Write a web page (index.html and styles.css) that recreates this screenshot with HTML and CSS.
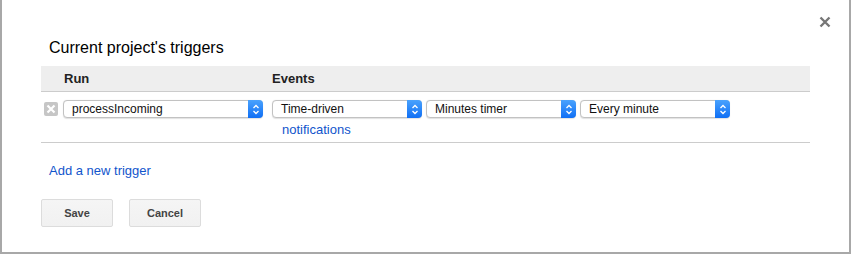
FILE: index.html
```html
<!DOCTYPE html>
<html>
<head>
<meta charset="utf-8">
<link rel="stylesheet" href="styles.css">
</head>
<body>
<div class="dialog">
  <svg class="close" width="12" height="12" viewBox="0 0 12 12"><path d="M1.5 1.5L10.5 10.5M10.5 1.5L1.5 10.5" stroke="#777" stroke-width="2.4"/></svg>
  <h1 class="title">Current project's triggers</h1>
  <div class="table">
    <div class="thead">
      <div class="col-run">Run</div>
      <div class="col-events">Events</div>
    </div>
    <div class="trow">
      <div class="cell-run">
        <span class="del"><svg width="10" height="10" viewBox="0 0 10 10"><path d="M1.5 1.5L8.5 8.5M8.5 1.5L1.5 8.5" stroke="#fff" stroke-width="2.2"/></svg></span>
        <div class="select w200"><span class="val">processIncoming</span><span class="arrow"><svg width="8" height="11" viewBox="0 0 8 11"><path d="M1.5 4L4 1.5L6.5 4M1.5 7L4 9.5L6.5 7" fill="none" stroke="#fff" stroke-width="1.3"/></svg></span></div>
      </div>
      <div class="cell-events">
        <div class="selects">
          <div class="select w150"><span class="val">Time-driven</span><span class="arrow"><svg width="8" height="11" viewBox="0 0 8 11"><path d="M1.5 4L4 1.5L6.5 4M1.5 7L4 9.5L6.5 7" fill="none" stroke="#fff" stroke-width="1.3"/></svg></span></div>
          <div class="select w150"><span class="val">Minutes timer</span><span class="arrow"><svg width="8" height="11" viewBox="0 0 8 11"><path d="M1.5 4L4 1.5L6.5 4M1.5 7L4 9.5L6.5 7" fill="none" stroke="#fff" stroke-width="1.3"/></svg></span></div>
          <div class="select w150"><span class="val">Every minute</span><span class="arrow"><svg width="8" height="11" viewBox="0 0 8 11"><path d="M1.5 4L4 1.5L6.5 4M1.5 7L4 9.5L6.5 7" fill="none" stroke="#fff" stroke-width="1.3"/></svg></span></div>
        </div>
        <a class="link notif" href="#">notifications</a>
      </div>
    </div>
  </div>
  <a class="link add" href="#">Add a new trigger</a>
  <div class="buttons">
    <button class="btn">Save</button>
    <button class="btn">Cancel</button>
  </div>
</div>
</body>
</html>
```
FILE: styles.css
```css
html, body { margin: 0; padding: 0; background: #fff; }
body { font-family: "Liberation Sans", Arial, sans-serif; }
.dialog {
  box-sizing: border-box;
  width: 851px;
  height: 254px;
  border: 2px solid #a8a8a8;
  border-top: none;
  padding: 39px 39px 0 39px;
  position: relative;
}
.close { position: absolute; left: 817px; top: 16px; }
.title {
  margin: 0 0 9px 8px;
  font-size: 16px;
  font-weight: normal;
  line-height: 18px;
  color: #000;
}
.thead {
  display: flex;
  align-items: center;
  height: 25px;
  background: #eeeeee;
  border-bottom: 1px solid #cccccc;
  font-size: 13px;
  font-weight: bold;
  color: #222;
}
.col-run { width: 208px; padding-left: 23px; }
.trow {
  display: flex;
  padding: 8px 0 5px 0;
  border-bottom: 1px solid #cccccc;
}
.cell-run { display: flex; align-items: flex-start; width: 231px; }
.del {
  flex: none;
  display: flex;
  align-items: center;
  justify-content: center;
  width: 14px;
  height: 14px;
  background: #c6c6c6;
  border-radius: 2px;
  margin: 2px 5px 0 3px;
}
.cell-events { display: flex; flex-direction: column; }
.selects { display: flex; gap: 4px; }
.select {
  box-sizing: border-box;
  height: 18px;
  display: flex;
  align-items: center;
  justify-content: space-between;
  background: #fff;
  border: 1px solid #c2c2c2;
  border-radius: 4px;
  box-shadow: 0 0.5px 1px rgba(0,0,0,0.12);
  font-size: 12px;
  color: #111;
}
.w200 { width: 200px; }
.w150 { width: 150px; }
.val { padding-left: 8px; line-height: 16px; }
.arrow {
  display: flex;
  align-items: center;
  justify-content: center;
  width: 15px;
  height: 18px;
  margin: -1px -1px -1px 0;
  background: linear-gradient(#4aa2fd, #0f6ff5);
  border-radius: 0 4px 4px 0;
}
.link { color: #1155cc; text-decoration: none; font-size: 13px; line-height: 15px; }
.notif { margin: 4px 0 0 10px; }
.add { display: block; margin: 20px 0 0 8px; }
.buttons { display: flex; gap: 16px; margin-top: 21px; }
.btn {
  box-sizing: border-box;
  width: 72px;
  height: 28px;
  background: linear-gradient(#f5f5f5, #f1f1f1);
  border: 1px solid #dcdcdc;
  border-radius: 2px;
  font-family: "Liberation Sans", Arial, sans-serif;
  font-size: 11px;
  font-weight: bold;
  color: #444;
  padding: 0;
}
```
